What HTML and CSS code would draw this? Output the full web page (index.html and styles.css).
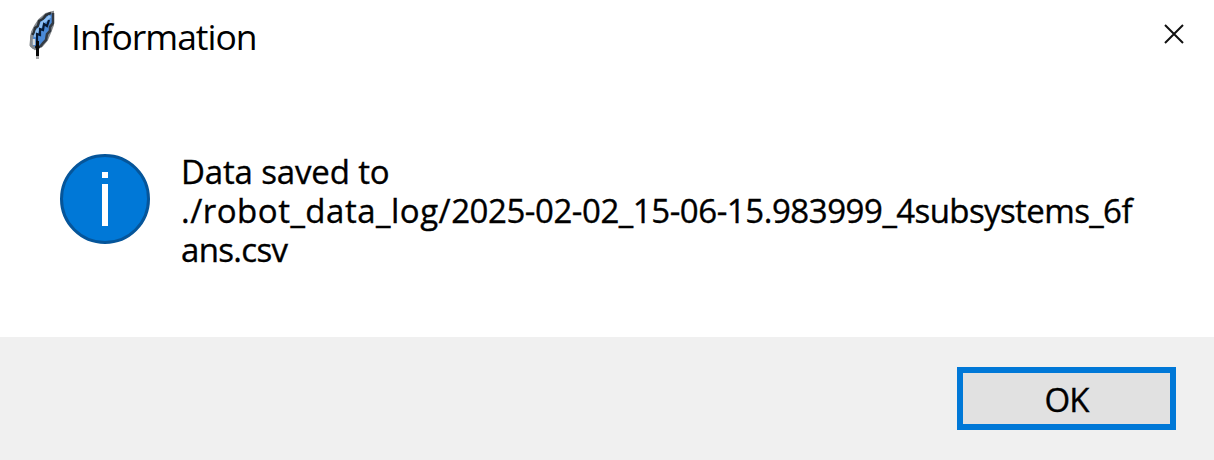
FILE: index.html
```html
<!DOCTYPE html>
<html lang="en">
<head>
<meta charset="utf-8">
<title>Information</title>
<link rel="stylesheet" href="styles.css">
</head>
<body>
<main class="dialog">
  <header class="titlebar">
    <svg class="feather" width="30" height="50" viewBox="0 0 30 50">
      <path d="M25 2L18 4L11 10L7 16L4 22L3 28L3 36L7 39L14 36L19 30L22 23L25 15Z" fill="#4a8ad8" stroke="#85898d" stroke-width="2"/>
      <path d="M23 3L18 5L15 9L11 11L10 16L7 18L6 23L4 25" fill="none" stroke="#2c3238" stroke-width="2.5"/>
      <path d="M22 6L18 10L14 13L12 18L9 21L7 27" fill="none" stroke="#8fc0f3" stroke-width="3"/>
      <path d="M25 3L25 13L22 17L22 21L19 24L18 30L15 33L12 37" fill="none" stroke="#343b44" stroke-width="2.5"/>
      <path d="M21 10L19 16L16 14L15 20L12 19L12 25L9 24L9 36" fill="none" stroke="#081a33" stroke-width="2.2"/>
      <path d="M4 25L3 35L6 38" fill="none" stroke="#85898d" stroke-width="3"/>
      <path d="M6 29V35" stroke="#d6dadd" stroke-width="2.5"/>
      <path d="M7 37L12 37" stroke="#202225" stroke-width="2.5"/>
      <path d="M9.5 31V46" stroke="#080808" stroke-width="3"/>
      <path d="M9.5 46V49" stroke="#aaa" stroke-width="3"/>
    </svg>
    <h1 class="title">Information</h1>
    <button class="close" aria-label="Close">
      <svg width="22" height="22" viewBox="0 0 22 22"><path d="M2 2L20 20M20 2L2 20" stroke="#111" stroke-width="2"/></svg>
    </button>
  </header>
  <section class="content">
    <svg class="info" width="90" height="90" viewBox="0 0 90 90">
      <circle cx="45" cy="45" r="43.5" fill="#0078d7" stroke="#05559a" stroke-width="3"/>
      <path d="M42 18h6v6h-6zM42 30h6v42h-6z" fill="#fff"/>
    </svg>
    <p class="message"><span class="line first">Data saved to</span><span class="line"><span class="folder">./robot_data_log/</span><span class="stamp">2025-02-02_15-06-15.983999</span><span class="suffix">_4subsystems_6f</span></span><span class="line third">ans.csv</span></p>
  </section>
  <footer class="actions"><button class="ok">OK</button></footer>
</main>
</body>
</html>
```
FILE: styles.css
```css
* { box-sizing: border-box; }
body { margin: 0; background: #fff; color: #000; font-family: "Open Sans", sans-serif; }
.dialog { width: 1214px; height: 460px; display: flex; flex-direction: column; overflow: hidden; }
.titlebar { height: 76px; display: flex; align-items: flex-start; padding: 10px 29px 0 28px; }
.feather { flex: none; filter: blur(0.5px); }
.title { margin: 1px 0 0 13px; font-size: 35.5px; line-height: 50px; font-weight: 400; letter-spacing: -1.03px; }
.close { margin: 13px 0 0 auto; padding: 0; width: 22px; height: 22px; border: 0; background: none; }
.close svg { display: block; }
.content { height: 261px; display: flex; align-items: flex-start; padding: 78px 0 0 60px; }
.info { flex: none; }
.message { margin: -2px 0 0 31px; font-size: 33px; line-height: 39px; -webkit-text-stroke: 0.35px #000; }
.line { display: block; white-space: nowrap; }
.first { letter-spacing: -0.15px; }
.folder { letter-spacing: 0.5px; }
.stamp { letter-spacing: -0.45px; }
.suffix { letter-spacing: -0.6px; }
.third { letter-spacing: -0.65px; }
.actions { height: 123px; background: #f0f0f0; display: flex; justify-content: flex-end; padding: 30px 38px 0 0; }
.ok { width: 219px; height: 63px; padding: 2px 0 0; border: 6px solid #0078d7; background: #e1e1e1; color: #000; font: 33px/49px "Open Sans", sans-serif; letter-spacing: -1px; -webkit-text-stroke: 0.35px #000; }
```
